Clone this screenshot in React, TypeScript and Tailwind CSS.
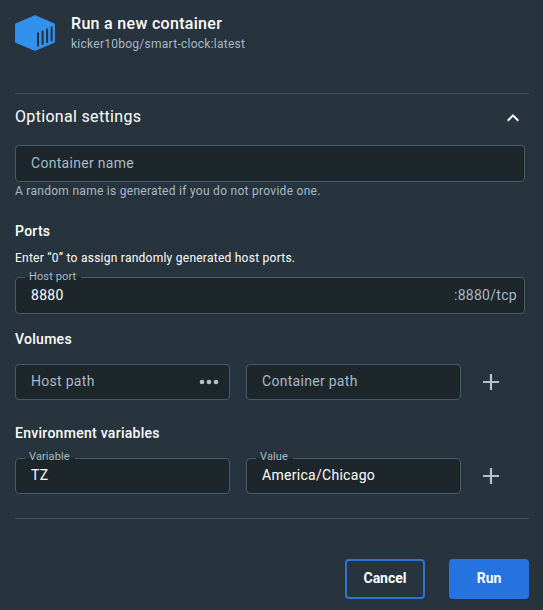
import type { ReactNode } from "react";

function Field({
  label,
  notch,
  labelTop = "-top-[9px]",
  className,
  children,
}: {
  label?: string;
  notch?: string;
  labelTop?: string;
  className: string;
  children: ReactNode;
}) {
  return (
    <div
      className={`relative flex items-center rounded-[4px] border border-[#465c6e] bg-[#1d272b] pl-[15px] text-[14px] tracking-[0.29px] text-[#a9b9c6] ${className}`}
    >
      {label && (
        <>
          <span className={`absolute -top-px left-[9px] h-px bg-[#1d272b] ${notch}`} />
          <span className={`absolute left-[13px] text-[11px] leading-4 tracking-[0.12px] ${labelTop}`}>{label}</span>
        </>
      )}
      {children}
    </div>
  );
}

function Plus() {
  return (
    <svg className="ml-[22px]" width="16" height="16" viewBox="0 0 16 16" fill="#b1c4ce">
      <path d="M6.9 0h2.2v6.9H16v2.2H9.1V16H6.9V9.1H0V6.9h6.9z" />
    </svg>
  );
}

export default function App() {
  return (
    <div className="flex h-[610px] w-[543px] flex-col bg-[#27343d] pl-[15px] font-[Roboto,sans-serif] text-white">
      <header className="flex h-[93px] pt-[14px]">
        <svg className="mt-px" width="40" height="36" viewBox="0 0 40 36">
          <path
            d="M20 .8 39.2 9.2V27L20 35.2.8 27V9.2z"
            fill="#3391ee"
            stroke="#3391ee"
            strokeWidth="1.4"
            strokeLinejoin="round"
          />
          <path
            d="M23 17.6v14M27.6 15.6v14.2M32.1 13.6V28M36.6 11.6v14.6"
            stroke="#22333f"
            strokeWidth="2"
          />
        </svg>
        <div className="ml-4">
          <h1 className="h-5 text-[16px] leading-[19px] font-medium tracking-[0.31px]">Run a new container</h1>
          <p className="text-[12px] leading-[20px] tracking-[0.26px] text-[#a9b9c6]">kicker10bog/smart-clock:latest</p>
        </div>
      </header>
      <div className="h-px w-[514px] bg-[#3e4f59]" />
      <div className="flex h-[51px] w-[510px] items-center justify-between pb-[5px]">
        <h2 className="text-[16px] leading-6 tracking-[0.32px]">Optional settings</h2>
        <svg className="mt-[2px]" width="24" height="24" viewBox="0 0 24 24" fill="#fff">
          <path d="m12 8-6 6 1.41 1.41L12 10.83l4.59 4.58L18 14z" />
        </svg>
      </div>
      <Field className="h-[37px] w-[510px] pb-px">Container name</Field>
      <p className="h-[39px] text-[12px] leading-[18px] tracking-[0.28px] text-[#a9b9c6]">
        A random name is generated if you do not provide one.
      </p>
      <h3 className="h-[27px] text-[14px] leading-5 font-medium tracking-[0.28px]">Ports</h3>
      <p className="h-[29px] text-[12px] leading-5 tracking-[0.25px]">
        Enter “0” to assign randomly generated host ports.
      </p>
      <Field label="Host port" notch="w-[56px]" className="h-[37px] w-[510px] justify-between pr-[7px]">
        <span className="text-white">8880</span>
        <span>:8880/tcp</span>
      </Field>
      <h3 className="h-[50px] pt-[15px] text-[14px] leading-5 font-medium tracking-[0.28px]">Volumes</h3>
      <div className="flex items-center">
        <Field className="h-[36px] w-[215px] justify-between pr-[10px] pb-px">
          <span>Host path</span>
          <svg className="mt-px" width="20" height="6" viewBox="0 0 20 6" fill="#b1c4ce">
            <circle cx="3" cy="3" r="2.3" />
            <circle cx="10" cy="3" r="2.3" />
            <circle cx="17" cy="3" r="2.3" />
          </svg>
        </Field>
        <Field className="ml-4 h-[36px] w-[215px] pb-px">Container path</Field>
        <Plus />
      </div>
      <h3 className="h-[58px] pt-[23px] text-[14px] leading-5 font-medium tracking-[0.28px]">Environment variables</h3>
      <div className="flex items-center">
        <Field label="Variable" notch="w-[50px]" labelTop="-top-[10px]" className="h-[36px] w-[215px] pb-px">
          <span className="text-white">TZ</span>
        </Field>
        <Field label="Value" notch="w-[37px]" labelTop="-top-[10px]" className="ml-4 h-[36px] w-[215px] pb-px">
          <span className="text-white">America/Chicago</span>
        </Field>
        <Plus />
      </div>
      <div className="mt-6 h-px w-[514px] bg-[#3e4f59]" />
      <footer className="mt-10 flex w-[514px] justify-end gap-6 text-[14px] font-bold">
        <button className="h-10 w-20 rounded-[4px] border-2 border-[#2e73d6] pb-px">Cancel</button>
        <button className="h-10 w-20 rounded-[4px] bg-[#2673e0] pb-px">Run</button>
      </footer>
    </div>
  );
}
